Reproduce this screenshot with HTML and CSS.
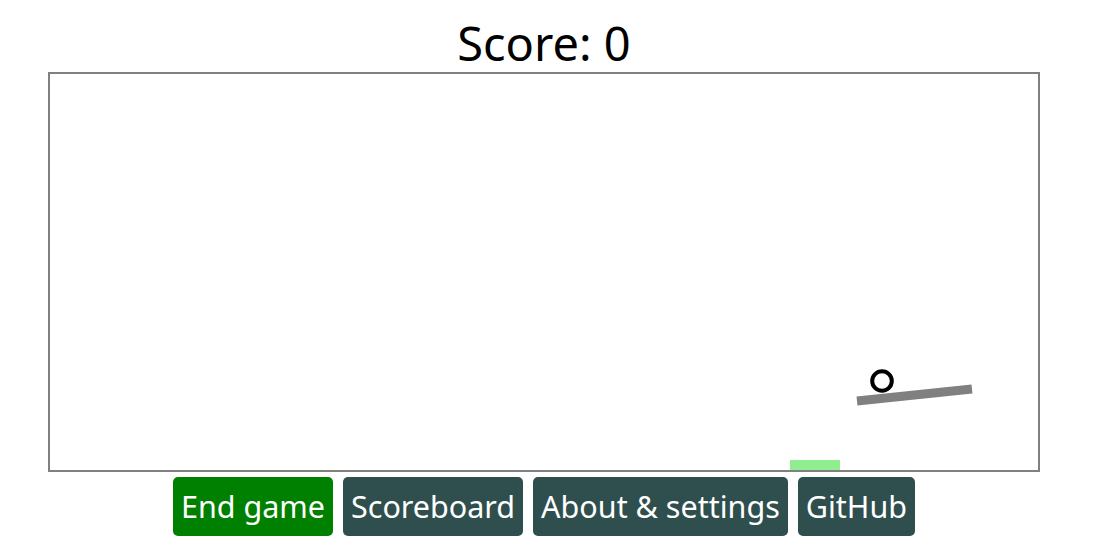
FILE: index.html
```html
<!DOCTYPE html>
<html lang="en">
<head>
<meta charset="utf-8">
<title>Score</title>
<link rel="stylesheet" href="styles.css">
</head>
<body>
<main class="app">
  <h1 class="score">Score: 0</h1>
  <div class="board">
    <svg class="field" width="988" height="396" viewBox="0 0 988 396">
      <rect class="goal" x="740" y="386" width="50" height="10"/>
      <line class="paddle" x1="807" y1="327" x2="922" y2="315"/>
      <circle class="ball" cx="832" cy="307" r="9.8"/>
    </svg>
  </div>
  <nav class="controls">
    <button class="btn btn-end">End game</button>
    <button class="btn">Scoreboard</button>
    <button class="btn">About &amp; settings</button>
    <button class="btn">GitHub</button>
  </nav>
</main>
</body>
</html>
```
FILE: styles.css
```css
html, body {
  margin: 0;
  padding: 0;
  background: #ffffff;
}
body {
  font-family: "Noto Sans", "Open Sans", sans-serif;
  color: #000;
}
.app {
  width: 1088px;
  display: flex;
  flex-direction: column;
  align-items: center;
}
.score {
  margin: 14px 0 0 0;
  font-size: 47px;
  font-weight: 400;
  line-height: 58px;
}
.board {
  width: 988px;
  height: 396px;
  border: 2px solid #808080;
}
.field {
  display: block;
}
.goal {
  fill: #90ee90;
}
.paddle {
  stroke: #808080;
  stroke-width: 9;
}
.ball {
  fill: none;
  stroke: #000;
  stroke-width: 4;
}
.controls {
  display: flex;
  gap: 10px;
  margin-top: 5px;
}
.btn {
  font-family: inherit;
  font-size: 30.5px;
  line-height: 43px;
  padding: 8px 8px;
  color: #fff;
  background: #2f4f4f;
  border: none;
  border-radius: 5px;
}
.btn-end {
  background: #008000;
}
```
